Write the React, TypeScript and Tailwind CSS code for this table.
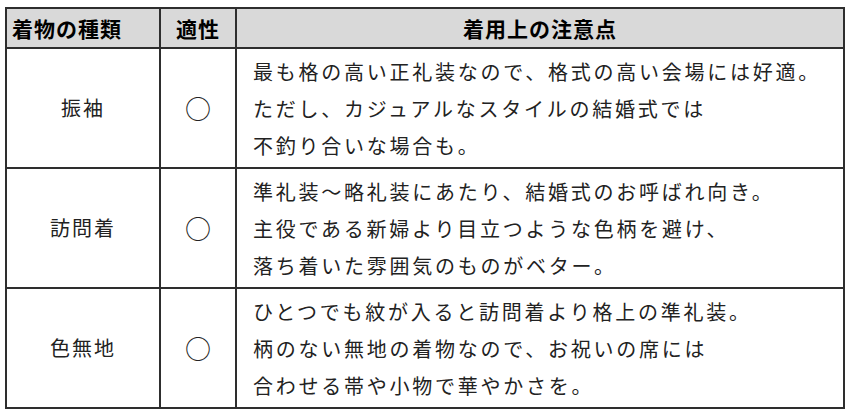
import React from "react";

const rows = [
  {
    name: "振袖",
    lines: [
      "最も格の高い正礼装なので、格式の高い会場には好適。",
      "ただし、カジュアルなスタイルの結婚式では",
      "不釣り合いな場合も。",
    ],
  },
  {
    name: "訪問着",
    lines: [
      "準礼装～略礼装にあたり、結婚式のお呼ばれ向き。",
      "主役である新婦より目立つような色柄を避け、",
      "落ち着いた雰囲気のものがベター。",
    ],
  },
  {
    name: "色無地",
    lines: [
      "ひとつでも紋が入ると訪問着より格上の準礼装。",
      "柄のない無地の着物なので、お祝いの席には",
      "合わせる帯や小物で華やかさを。",
    ],
  },
];

export default function App() {
  return (
    <div
      className="w-[850px] h-[415px] bg-white pt-[7px] pl-[5px]"
      style={{ fontFamily: '"Noto Sans CJK JP", "Noto Sans", sans-serif' }}
    >
      <table className="border-collapse table-fixed w-[838px] border-2 border-[#3a3a3a]">
        <colgroup>
          <col className="w-[154px]" />
          <col className="w-[76px]" />
          <col className="w-[608px]" />
        </colgroup>
        <thead>
          <tr className="h-[40px] bg-[#d9d9d9]">
            <th className="border-2 border-[#2e2e2e] text-left pl-[5px] text-[21px] font-bold tracking-[1px] text-black leading-none">
              着物の種類
            </th>
            <th className="border-2 border-[#2e2e2e] text-center text-[21px] font-bold tracking-[1px] text-black leading-none">
              適性
            </th>
            <th className="border-2 border-[#2e2e2e] text-center text-[21px] font-bold tracking-[1px] text-black leading-none">
              着用上の注意点
            </th>
          </tr>
        </thead>
        <tbody>
          {rows.map((r) => (
            <tr key={r.name} className="h-[120px]">
              <td className="border-2 border-[#2e2e2e] text-center align-middle text-[20px] tracking-[2px] text-[#222]">
                {r.name}
              </td>
              <td className="border-2 border-[#2e2e2e] text-center align-middle text-[26px] leading-none text-[#222]">
                ○
              </td>
              <td className="border-2 border-[#2e2e2e] align-middle pl-[16px] text-[20px] tracking-[2.75px] leading-[37px] text-[#222]">
                {r.lines.map((l) => (
                  <div key={l} className="whitespace-nowrap">
                    {l}
                  </div>
                ))}
              </td>
            </tr>
          ))}
        </tbody>
      </table>
    </div>
  );
}
